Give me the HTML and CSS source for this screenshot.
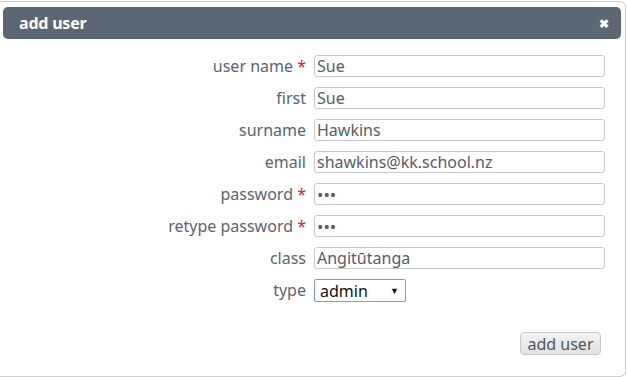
FILE: index.html
```html
<!DOCTYPE html>
<html lang="en">
<head>
  <meta charset="UTF-8">
  <title>add user</title>
  <link rel="stylesheet" href="styles.css">
</head>
<body>
  <div class="dialog">
    <div class="titlebar">
      <span class="title">add user</span>
      <span class="close">&#10006;</span>
    </div>
    <form class="form">
      <label class="lbl">user name <span class="req">*</span></label>
      <input class="field" type="text" value="Sue">
      <label class="lbl">first</label>
      <input class="field" type="text" value="Sue">
      <label class="lbl">surname</label>
      <input class="field" type="text" value="Hawkins">
      <label class="lbl">email</label>
      <input class="field" type="text" value="shawkins@kk.school.nz">
      <label class="lbl">password <span class="req">*</span></label>
      <input class="field" type="password" value="abc">
      <label class="lbl">retype password <span class="req">*</span></label>
      <input class="field" type="password" value="abc">
      <label class="lbl">class</label>
      <input class="field" type="text" value="Angitūtanga">
      <label class="lbl">type</label>
      <div class="select-wrap">
        <div class="select">admin<span class="arrow">&#9660;</span></div>
      </div>
    </form>
    <div class="actions">
      <button class="btn" type="button">add user</button>
    </div>
  </div>
</body>
</html>
```

FILE: styles.css
```css
* { margin: 0; padding: 0; box-sizing: border-box; }
body {
  font-family: 'Noto Sans', sans-serif;
  background: #fff;
  color: #5b6470;
}

.dialog {
  margin-top: 1px;
  width: 626px;
  height: 376px;
  border: 1px solid #d0d0d0;
  border-left: none;
  border-radius: 0 6px 6px 0;
  padding: 5px 4px 0 3px;
}

.titlebar {
  height: 32px;
  background: #5b6772;
  border-radius: 5px;
  display: flex;
  align-items: center;
  justify-content: space-between;
  padding: 0 12px 0 16px;
  color: #fff;
}
.title {
  font-size: 16px;
  font-weight: 700;
  letter-spacing: -0.2px;
}
.close {
  font-size: 12px;
  font-weight: 700;
}

.form {
  display: grid;
  grid-template-columns: 303px 291px;
  column-gap: 8px;
  row-gap: 10px;
  margin-top: 16px;
  align-items: start;
}
.lbl {
  text-align: right;
  font-size: 16px;
  line-height: 22px;
  color: #5b6470;
}
.req { color: #e02020; font-weight: 400; }

.field {
  height: 22px;
  border: 1px solid #c8c8c8;
  border-radius: 3px;
  padding: 0 2px;
  font-family: 'Noto Sans', sans-serif;
  font-size: 16px;
  color: #555d68;
  outline: none;
}
input[type=password] {
  font-size: 17px;
  letter-spacing: 0;
}

.select {
  width: 92px;
  height: 23px;
  border: 1px solid #7a9cd3;
  border-radius: 2px;
  padding: 0 6px 0 5px;
  display: flex;
  align-items: center;
  justify-content: space-between;
  font-size: 16px;
  color: #111;
}
.arrow { font-size: 9px; }

.actions {
  display: flex;
  justify-content: flex-end;
  padding-right: 20px;
  margin-top: 30px;
}
.btn {
  width: 81px;
  height: 23px;
  background: linear-gradient(#f2f2f2, #e2e2e2);
  border: 1px solid #c8c8c8;
  border-radius: 4px;
  font-family: 'Noto Sans', sans-serif;
  font-size: 16px;
  color: #4e5661;
  line-height: 20px;
}
```
